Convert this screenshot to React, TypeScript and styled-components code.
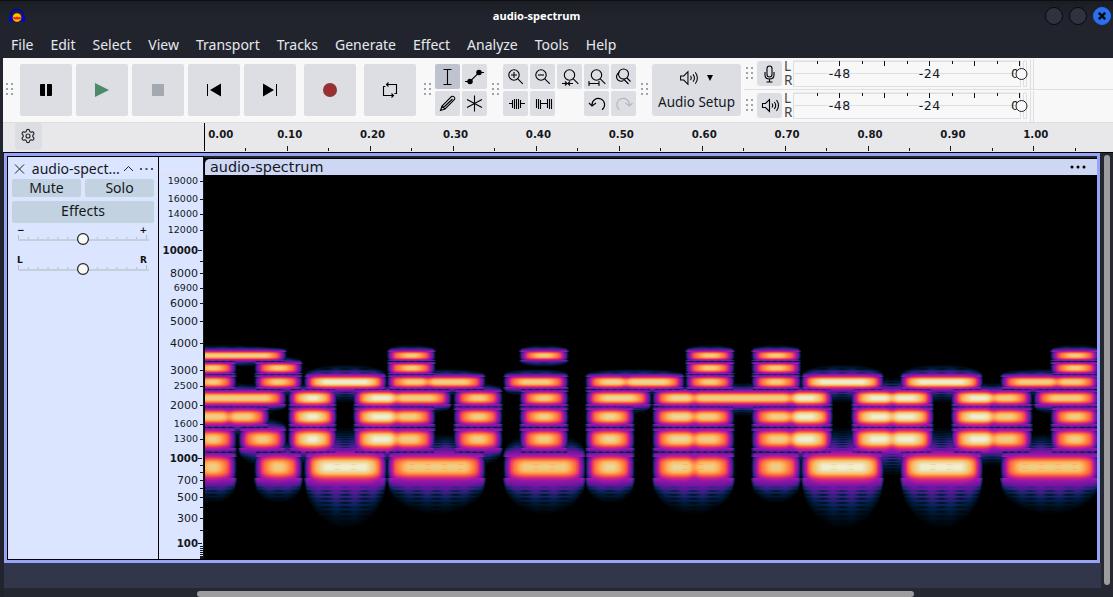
import React, { useLayoutEffect, useRef } from 'react';
import styled, { createGlobalStyle, css } from 'styled-components';
import { Settings } from 'lucide-react';

const Global = createGlobalStyle`
  * { box-sizing: border-box; }
  html, body { margin: 0; overflow: hidden; background: #22242d; }
  button { border: 0; margin: 0; padding: 0; font: inherit; color: inherit; }
  svg, canvas { display: block; }
`;

const Window = styled.div`
  width: 1113px;
  height: 597px;
  display: flex;
  flex-direction: column;
  background: #22242d;
  color: #15171c;
  font-family: 'Noto Sans', sans-serif;
  overflow: hidden;
`;

const TitleBar = styled.header`
  height: 31px;
  flex: none;
  display: grid;
  grid-template-columns: 1fr auto 1fr;
  align-items: center;
  border-top: 1px solid #0e0f13;
  background: linear-gradient(#1b1d24, #22242d 16px);
  color: #fff;
`;
const AppIcon = styled.div`
  padding: 0 0 1px 8px;
`;
const Title = styled.h1`
  margin: 0;
  padding: 0 40px 2px 0;
  font-size: 11.1px;
  font-weight: 700;
  line-height: 27px;
`;
const Controls = styled.div`
  display: flex;
  justify-content: flex-end;
  gap: 6px;
  padding-right: 2px;
`;
const Control = styled.button<{ $close?: boolean }>`
  width: 18px;
  height: 18px;
  border-radius: 50%;
  border: 1px solid ${p => (p.$close ? '#2a70ef' : '#08090c')};
  background: ${p => (p.$close ? '#2a70ef' : '#30333f')};
  display: grid;
  place-items: center;
`;
const MenuBar = styled.nav`
  height: 27px;
  flex: none;
  display: flex;
  gap: 17px;
  padding-left: 11px;
  font-size: 14px;
  line-height: 27px;
  color: #e6e8ee;
`;

const Toolbars = styled.section`
  height: 65px;
  flex: none;
  margin-left: 3px;
  display: flex;
  background: #f8f8f8;
  border-bottom: 1px solid #dcdde0;
`;
const Grip = styled.span<{ $w: number; $top: number; $pad?: number }>`
  width: ${p => p.$w}px;
  height: 13px;
  flex: none;
  margin-top: ${p => p.$top}px;
  padding-left: ${p => p.$pad ?? 3}px;
`;
const Transport = styled.div`
  display: flex;
  padding-top: 6px;
  width: 401px;
`;
const BigButton = styled.button<{ $gap?: number }>`
  width: 52px;
  height: 52px;
  flex: none;
  margin-right: ${p => p.$gap ?? 4}px;
  border-radius: 2px;
  background: #dddee3;
  display: grid;
  place-items: center;
`;
const ToolGrid = styled.div<{ $cols: number }>`
  display: grid;
  grid-template-columns: repeat(${p => p.$cols}, 25px);
  grid-auto-rows: 25px;
  gap: 2px;
  padding-top: 6px;
`;
const Tool = styled.button<{ $on?: boolean; $col?: number }>`
  border-radius: 2px;
  background: ${p => (p.$on ? '#bfc2cf' : '#dddee3')};
  ${p => p.$col && css`grid-column: ${p.$col};`}
`;
const Setup = styled.button`
  width: 89px;
  height: 52px;
  flex: none;
  margin-top: 6px;
  border-radius: 3px;
  background: #dddee3;
  font-size: 13.5px;
  display: flex;
  flex-direction: column;
  align-items: center;
  white-space: nowrap;
  line-height: 22px;
`;
const SetupIcons = styled.span`
  display: flex;
  align-items: center;
  gap: 6px;
  height: 27px;
  padding-right: 3px;
`;
const Meters = styled.div`
  flex: 1;
  min-width: 0;
  padding-left: 3px;
`;
const MeterRow = styled.div`
  height: 32px;
  display: flex;
  padding-top: 3px;
  border-bottom: 1px solid #dedfe3;
  &:last-child { border-bottom: 0; }
`;
const MeterButton = styled.button`
  width: 25px;
  height: 25px;
  flex: none;
  border-radius: 3px;
  background: #dddee3;
`;
const Channels = styled.span`
  width: 11px;
  flex: none;
  padding-left: 2px;
  font-size: 13.5px;
  line-height: 13.5px;
  margin-top: -1px;
  color: #444;
`;
const Scale = styled.svg`
  flex: none;
  overflow: visible;
`;

const RulerBar = styled.div`
  height: 30px;
  flex: none;
  margin-left: 3px;
  display: flex;
  background: #e8e8ea;
  border-bottom: 1px solid #000;
`;
const RulerHead = styled.div`
  width: 201px;
  padding: 0 12px;
`;
const Gear = styled.button`
  width: 27px;
  height: 27px;
  border-radius: 4px;
  background: #dddee3;
  display: grid;
  place-items: center;
  padding: 0 1px 1px 0;
`;

const Workspace = styled.main`
  flex: 1;
  min-height: 0;
  display: flex;
  background: #22242d;
`;
const TrackColumn = styled.div`
  width: 1101px;
  padding-left: 4px;
  display: flex;
  flex-direction: column;
`;
const Track = styled.div`
  width: 1096px;
  height: 410px;
  display: flex;
  border: 3px solid #97a3f7;
  background: #dbe5ff;
`;
const Panel = styled.aside`
  width: 152px;
  border: 1px solid #000;
  padding: 3px 4px 0;
`;
const PanelHead = styled.div`
  height: 19px;
  display: flex;
  align-items: center;
  padding: 0 0 2px 2px;
  font-size: 14px;
`;
const TrackName = styled.span`
  width: 97px;
  padding-left: 7px;
  white-space: nowrap;
`;
const PanelRow = styled.div`
  display: flex;
  gap: 4px;
  margin-bottom: 4px;
`;
const PanelButton = styled.button<{ $h: number }>`
  flex: 1;
  height: ${p => p.$h}px;
  border-radius: 2px;
  background: #c3d2e1;
  font-size: 14px;
  line-height: ${p => (p.$h > 20 ? 20 : 18)}px;
  padding-bottom: ${p => (p.$h > 20 ? 2 : 0)}px;
`;
const Sliders = styled.div`
  margin-top: -3px;
`;
const VRuler = styled.div`
  width: 45px;
  border-top: 1px solid #000;
  border-bottom: 1px solid #000;
`;
const Clip = styled.section`
  width: 893px;
  background: #000;
  border-top: 2px solid #22242d;
`;
const ClipHead = styled.div`
  height: 17px;
  margin-left: 1px;
  width: 892px;
  padding: 0 11px 0 5px;
  display: flex;
  justify-content: space-between;
  align-items: center;
  border-top: 1px solid #000;
  border-radius: 5px 0 0 0;
  background: #cdd6f2;
  font-family: 'DejaVu Sans', sans-serif;
  font-size: 14.4px;
  line-height: 15px;
`;
const Canvas = styled.canvas`
  margin-left: 1px;
`;
const Below = styled.div`
  height: 25px;
  background: #32364a;
`;
const HScroll = styled.div`
  flex: 1;
  padding: 3px 0 0 193px;
  background: #262831;
`;
const HThumb = styled.div`
  width: 717px;
  height: 6px;
  border-radius: 3px;
  background: #9d9d9f;
`;
const VScroll = styled.div`
  flex: 1;
  padding: 2px 0 0 3px;
  background: #262831;
`;
const VThumb = styled.div`
  width: 6px;
  height: 430px;
  border-radius: 3px;
  background: #9d9d9f;
`;

/* ---------- spectrogram ---------- */
const ROWS: number[][][] = [
  [[140, 285], [389, 434], [521, 567], [687, 733], [753, 799], [1052, 1098]],
  [[190, 235], [256, 301], [389, 434], [687, 733], [753, 799], [1052, 1098]],
  [[190, 235], [256, 301], [306, 385], [389, 484, 428], [505, 567], [587, 683, 626], [687, 733], [753, 799], [803, 882], [902, 981], [1002, 1098, 1057]],
  [[140, 285], [290, 335], [355, 450, 396], [455, 501], [521, 567], [587, 650], [654, 831, 694, 791], [853, 932, 892], [953, 1031, 993], [1035, 1098]],
  [[180, 268, 229], [290, 335], [355, 434, 396], [455, 501], [521, 567], [587, 633], [654, 733, 694], [753, 831, 791], [853, 932, 892], [953, 1031, 993], [1052, 1098]],
  [[190, 235], [240, 285], [290, 335], [355, 434, 396], [455, 501], [521, 567], [587, 633], [654, 733, 694], [753, 831, 791], [853, 932, 892], [953, 1031, 993], [1052, 1098]],
  [[190, 235], [256, 301], [306, 385], [389, 484], [505, 584], [587, 633], [654, 733, 694], [753, 799], [803, 882], [902, 981], [1002, 1098]],
];
const STOPS: number[][] = [
  [0, 0, 0, 0], [0.1, 0, 14, 28], [0.2, 0, 32, 72], [0.3, 50, 32, 122], [0.4, 102, 22, 160],
  [0.52, 158, 22, 166], [0.62, 208, 36, 126], [0.72, 246, 82, 76], [0.8, 255, 134, 62],
  [0.87, 252, 184, 98], [0.92, 238, 208, 138], [1, 240, 243, 220],
];
const lerpTable = (t: number[][], v: number, k: number) => {
  if (v <= t[0][0]) return t[0][k];
  for (let i = 1; i < t.length; i++) {
    if (v <= t[i][0]) {
      const u = (v - t[i - 1][0]) / (t[i][0] - t[i - 1][0]);
      return t[i - 1][k] + u * (t[i][k] - t[i - 1][k]);
    }
  }
  return t[t.length - 1][k];
};
const FREQ_LOSS = [[0, 0], [40, 0.02], [80, 0.08], [110, 0.17], [140, 0.28], [170, 0.38], [210, 0.47], [240, 0.56]];
const EDGE_LOSS = [[-3, 1], [-1, 0.78], [0, 0.64], [1, 0.54], [3, 0.42], [6, 0.24], [9, 0.15], [14, 0.07], [20, 0]];
const smooth = (x: number, at: number) => 1 / (1 + Math.exp(-(x - at) / 2));
const peakAt = (x: number) =>
  0.92 +
  0.075 * (smooth(x, 288) * (1 - smooth(x, 396))) +
  0.02 * (smooth(x, 585) * (1 - smooth(x, 694))) +
  0.075 * (smooth(x, 794) * (1 - smooth(x, 993)));

function levelAt(x: number, y: number) {
  const f = 700 * (Math.pow(10, ((558.5 - y) * 10) / 2595) - 1);
  let first = 0;
  let second = 0;
  for (let r = 0; r < 7; r++) {
    const df = Math.abs(f - (876 + (6 - r) * 444));
    if (df > 760) continue;
    let best = 0;
    for (const [a, b, ...dips] of ROWS[r]) {
      const d = Math.min(x - a, b - x);
      if (d < -2) continue;
      const hot = (a >= 290 && b <= 386) || (a > 800 && b < 985);
      const peak = hot ? 0.995 : b < 302 ? 0.92 : peakAt(x);
      const e = lerpTable(EDGE_LOSS, d, 1);
      const g = lerpTable(FREQ_LOSS, df, 1);
      let v = df > 240 ? 0 : peak - Math.pow(Math.pow(e, 1.5) + Math.pow(g, 1.5), 1 / 1.5);
      for (const p of dips) v -= 0.09 * Math.exp(-((x - p) ** 2) / 20);
      const wide = b - a > 60;
      const half = wide ? (b - a) / 2 : 23;
      const far = r === 6 ? (wide ? (hot ? 660 : 540) : 430) : wide && hot ? 560 : 420;
      const u = Math.min(1, Math.max(0, (d + 1) / half));
      const reach = 230 + (far - 230) * Math.sqrt(1 - (1 - u) ** 2);
      if (df > 150) {
        const t = Math.max(0, 1 - (df - 150) / (reach - 150));
        const c = (x - (a + b) / 2) * 0.33;
        const amount = Math.min(0.26, Math.max(0, df - 225) / 400);
        const ripple = 1 - amount * (1 + Math.cos((df / 43) * 6.283)) * (0.65 + 0.45 * Math.cos(c));
        v = Math.max(v, 0.54 * Math.pow(t, 0.85) * ripple * Math.min(1, (d + 4) / 5));
      }
      if (r === 6 && wide && b - a < 100 && df < 45 && d > 18) {
        v -= 0.045 * Math.max(0, Math.cos((y - 467) * 2.6)) * Math.max(0, Math.cos((x - (a + b) / 2 - 8) * 0.38));
      }
      if (v > best) best = v;
    }
    if (best > first) { second = first; first = best; } else if (best > second) second = best;
  }
  const lower = (f - 876) / 444;
  const mid = Math.abs(lower - Math.floor(lower) - 0.5) * 444;
  if (second > 0.2 && lower > 0 && lower < 6) {
    first -= (0.2 + 0.07 * Math.cos(x * 0.9)) * Math.exp(-(mid * mid) / 170);
  }
  return first;
}

function Spectrogram() {
  const ref = useRef<HTMLCanvasElement>(null);
  useLayoutEffect(() => {
    const ctx = ref.current!.getContext('2d')!;
    const img = ctx.createImageData(892, 384);
    for (let j = 0; j < 384; j++) {
      for (let i = 0; i < 892; i++) {
        const v = j < 155 ? 0 : levelAt(205.5 + i, 175.5 + j);
        const o = (j * 892 + i) * 4;
        for (let k = 0; k < 3; k++) img.data[o + k] = lerpTable(STOPS, v, k + 1);
        img.data[o + 3] = 255;
      }
    }
    ctx.putImageData(img, 0, 0);
  }, []);
  return <Canvas ref={ref} width={892} height={384} />;
}

/* ---------- rulers ---------- */
const FREQS: [string, number, number][] = [
  ['19000', 181, 0], ['16000', 199, 0], ['14000', 214, 0], ['12000', 230, 0], ['10000', 250, 2], ['8000', 273, 1],
  ['6900', 287.5, 0], ['6000', 303, 1], ['5000', 321, 1], ['4000', 343, 1], ['3000', 370, 1], ['2500', 386, 0],
  ['2000', 405, 1], ['1600', 424, 0], ['1300', 439, 0], ['1000', 458, 2], ['700', 480, 1], ['500', 497, 1],
  ['300', 518, 1], ['100', 543, 2],
];
const MINOR = [261, 465, 472, 488, 507, 530, 546, 548, 550, 552, 554, 556, 557, 558];

const FreqRuler = () => (
  <svg width="45" height="402" viewBox="159 157 45 402" fontFamily="DejaVu Sans, sans-serif" fill="#15171c" textAnchor="end">
    <rect x="159" y="174" width="42" height="1" fill="#e4e0ea" />
    {FREQS.map(([t, y, k]) => (
      <g key={t}>
        <text x="198" y={y + (k ? 4 : 3)} fontSize={k === 2 ? 10.2 : k ? 11 : 9.5} fontWeight={k === 2 ? 700 : 400}>{t}</text>
        <rect x={k === 2 ? 198 : 200} y={Math.round(y)} width="4" height="1" />
      </g>
    ))}
    {MINOR.map(y => <rect key={y} x="200" y={y} width="4" height="1" />)}
    <rect x="203" y="157" width="1" height="402" />
  </svg>
);

const TimeRuler = () => (
  <svg width="909" height="29" viewBox="204 123 909 29" fontFamily="DejaVu Sans, sans-serif" fontSize="10.200" fontWeight="700" fill="#15171c" textAnchor="middle">
    <rect x="204" y="123" width="1" height="28" fill="#000" />
    {Array.from({ length: 11 }, (_, i) => (
      <text key={i} x={i ? 206.8 + i * 82.9 : 220.8} y="138">{(i / 10).toFixed(2)}</text>
    ))}
    {Array.from({ length: 21 }, (_, i) => i + 1).map(i => (
      <rect key={i} x={Math.round(204 + i * 41.47)} y={i % 2 ? 148 : 146} width="1" height={i % 2 ? 3 : 5} />
    ))}
  </svg>
);

/* ---------- icons ---------- */
const Dots = () => (
  <svg width="8" height="13" fill="#a0a2ae">
    {[0, 5, 10].map(y => [0, 5].map(x => <rect key={`${x}${y}`} x={x} y={y} width="2" height="2" />))}
  </svg>
);
const Line = ({ children, w = 25, h = 25 }: { children: React.ReactNode; w?: number; h?: number }) => (
  <svg width={w} height={h} viewBox={`0 0 ${w} ${h}`} fill="none" stroke="#000" strokeWidth="1.1">{children}</svg>
);
const Lens = ({ x = 0 }: { x?: number }) => (
  <><circle cx={11 + x} cy="11" r="5.200" /><path d={`M${14.8 + x} 14.800l5 5`} /></>
);
const Speaker = () => (
  <path d="M5.500 10.500h3l4-4v12l-4-4h-3zM15 10.500q1.500 2 0 4M17.300 9q2.800 3.500 0 7M19.500 7q4 5.500 0 11" />
);

const MeterScale = () => (
  <Scale width="320" height="27" viewBox="793 61 320 27" fill="none">
    <path d="M793.500 61v25.500h227V61zM793.500 61.500h227M1023.500 61v25.500h3V61z M793 73.500h227" stroke="#dedfe3" />
    <path d={[817, 839, 862, 884, 907, 929, 952, 974, 997, 1019].map((x, i) => `M${x + 0.5} 61v${i % 2 ? 5 : 3}`).join('')} stroke="#111" />
    <g fontFamily="DejaVu Sans, sans-serif" fontSize="12.500" fill="#15171c" textAnchor="middle">
      <text x="839.500" y="77.500" textLength="21.500">-48</text>
      <text x="929.500" y="77.500" textLength="21.500">-24</text>
      <text x="1015" y="77.500">0</text>
    </g>
    <circle cx="1021.500" cy="74" r="5.500" fill="#f8f8f8" stroke="#222" />
    <path d="M1030.500 59v31M1033.500 59v31" stroke="#dedfe3" />
  </Scale>
);

const Slider = ({ left, right }: { left: string; right: string }) => (
  <svg width="142" height="30" viewBox="12 224 142 30" fontFamily="DejaVu Sans, sans-serif" fontSize="9" fontWeight="700" fill="#111">
    <text x="17" y="232.500">{left}</text>
    <text x="147" y="232.500" textAnchor="end">{right}</text>
    <rect x="18" y="239" width="131" height="2" fill="#c3d0dc" />
    {Array.from({ length: 14 }, (_, i) => (
      <rect key={i} x={18 + i * 9.85} y={i % 13 ? 237 : 235} width="1" height={i % 13 ? 2 : 4} fill="#b9bcc4" />
    ))}
    <circle cx="83" cy="239" r="5.400" fill="#fafafa" stroke="#222" strokeWidth="1.200" />
  </svg>
);

const MENU = ['File', 'Edit', 'Select', 'View', 'Transport', 'Tracks', 'Generate', 'Effect', 'Analyze', 'Tools', 'Help'];

export default function App() {
  return (
    <Window>
      <Global />
      <TitleBar>
        <AppIcon>
          <svg width="18" height="16" viewBox="0 0 18 16">
            <path d="M2.500 10V8a6.500 6.500 0 0 1 13 0v2" fill="none" stroke="#0000c8" strokeWidth="1.500" />
            <rect x="1" y="8" width="3.500" height="6" rx="1.500" fill="#0000e0" />
            <rect x="13.500" y="8" width="3.500" height="6" rx="1.500" fill="#0000e0" />
            <circle cx="9" cy="9.500" r="4.300" fill="#ffc400" />
            <path d="M5 10l1-1.500 1.500 1 1.500-1 1.500 1 1.500-1 1 1.500-1.500 1.500h-5z" fill="#f02010" />
          </svg>
        </AppIcon>
        <Title>audio-spectrum</Title>
        <Controls>
          <Control /><Control />
          <Control $close>
            <svg width="8" height="8"><path d="M.8 .8l6.400 6.400M7.200 .8L.8 7.200" stroke="#0a0c14" strokeWidth="2.500" /></svg>
          </Control>
        </Controls>
      </TitleBar>
      <MenuBar>{MENU.map(m => <span key={m}>{m}</span>)}</MenuBar>

      <Toolbars>
        <Grip $w={17} $top={25}><Dots /></Grip>
        <Transport>
          <BigButton><svg width="12" height="12"><path d="M0 1q0-1 1-1h4v12H1q-1 0-1-1zM7 0h4q1 0 1 1v10q0 1-1 1H7z" /></svg></BigButton>
          <BigButton><svg width="14" height="14"><path d="M0 0l14 7-14 7z" fill="#4c8b6a" /></svg></BigButton>
          <BigButton><svg width="12" height="12"><rect width="12" height="12" fill="#a3a8b1" /></svg></BigButton>
          <BigButton><svg width="14" height="14"><path d="M0 1h1v12H0zM14 .5v13L3 7z" /></svg></BigButton>
          <BigButton $gap={8}><svg width="14" height="14"><path d="M13 1h1v12h-1zM0 .5v13L11 7z" /></svg></BigButton>
          <BigButton $gap={8}><svg width="14" height="14"><circle cx="7" cy="7" r="7" fill="#973032" /></svg></BigButton>
          <BigButton>
            <svg width="16" height="18" fill="none" stroke="#000" strokeWidth="1.100">
              <path d="M1.500 5v9.500h10M9.500 12.500l2 2-2 2M14.500 13V3.500h-10M6.500 1.500l-2 2 2 2M1.500 5.500h2M14.500 12.500h-2" />
            </svg>
          </BigButton>
        </Transport>
        <Grip $w={14} $top={25}><Dots /></Grip>
        <ToolGrid $cols={2}>
          <Tool $on><Line><path d="M8.500 5.500h8M8.500 20.500h8M12.500 5.500v15" /></Line></Tool>
          <Tool><Line><path d="M3 17.500h5L17 8.500h5" /><circle cx="8" cy="17.500" r="2.200" fill="#000" /><circle cx="17" cy="8.500" r="2.200" fill="#000" /></Line></Tool>
          <Tool><Line><path d="M5.500 19.500l1.500-4.500L16.500 5.500q1.500-.8 2.700.5t.3 2.500L10 18zM7 15l3 3M8.500 16.500l9-8.500" /></Line></Tool>
          <Tool><Line><path d="M12.500 4.500v16M5 8.500l15 8M20 8.500l-15 8" /></Line></Tool>
        </ToolGrid>
        <Grip $w={16} $top={25} $pad={5}><Dots /></Grip>
        <ToolGrid $cols={5}>
          <Tool><Line><Lens /><path d="M8 11h6M11 8v6" /></Line></Tool>
          <Tool><Line><Lens /><path d="M8 11h6" /></Line></Tool>
          <Tool><Line><Lens x={1.5} /><path d="M5 19.500h4.500M11 19.500h5M8 17.500l2 2-2 2M13 17.500l-2 2 2 2" /></Line></Tool>
          <Tool><Line><Lens x={1.5} /><path d="M5 19.500h10M5 17v5M15 17v5" /></Line></Tool>
          <Tool><Line><circle cx="12.500" cy="10" r="5" /><path d="M16 14l3.500 3.500M8.500 8.500a4.500 4.500 0 1 0 4 8M12.500 15l5 5" /></Line></Tool>
          <Tool><Line><path d="M6 12.500h3M18 12.500h4M9.500 9v8M11.500 8v10M13.500 8v10M15.500 8v10M17.500 9v8" /></Line></Tool>
          <Tool><Line><path d="M6.500 8v9M8.500 8v10M10.500 9v9M11 12.500h6M17.500 8v9M19.500 8v10M21.500 8v10" /></Line></Tool>
          <Tool $col={4}><Line><path d="M8 14a6.300 6.300 0 1 1 10 4.800M5 12l3 3 4-3" /></Line></Tool>
          <Tool><svg width="25" height="25" fill="none" stroke="#b5b7bd" strokeWidth="1.100"><path d="M18.500 14a6.300 6.300 0 1 0-10 4.800M21.500 12l-3 3-4-3" /></svg></Tool>
        </ToolGrid>
        <Grip $w={16} $top={25} $pad={5}><Dots /></Grip>
        <Setup>
          <SetupIcons>
            <svg width="24" height="22" viewBox="3 2 21 21" fill="none" stroke="#000" strokeWidth="1"><Speaker /></svg>
            <svg width="6" height="6"><path d="M0 0h6L3 6z" /></svg>
          </SetupIcons>
          Audio Setup
        </Setup>
        <Meters>
          <MeterRow>
            <Grip $w={13} $top={6} $pad={2}><Dots /></Grip>
            <MeterButton><Line><rect x="10" y="5" width="5" height="11" rx="2.500" /><path d="M8 11v3q0 4 4.500 4t4.500-4v-3M12.500 18v3M9.500 21h6" /></Line></MeterButton>
            <Channels>L<br />R</Channels><MeterScale />
          </MeterRow>
          <MeterRow>
            <Grip $w={13} $top={6} $pad={2}><Dots /></Grip>
            <MeterButton><Line><Speaker /></Line></MeterButton>
            <Channels>L<br />R</Channels><MeterScale />
          </MeterRow>
        </Meters>
      </Toolbars>

      <RulerBar>
        <RulerHead>
          <Gear><Settings size={16} strokeWidth={1.7} color="#222" /></Gear>
        </RulerHead>
        <TimeRuler />
      </RulerBar>

      <Workspace>
        <TrackColumn>
          <Track>
            <Panel>
              <PanelHead>
                <svg width="11" height="10"><path d="M1 .5l9 9M10 .5l-9 9" stroke="#222" /></svg>
                <TrackName>audio-spect...</TrackName>
                <svg width="34" height="8" fill="none" stroke="#222"><path d="M3 6l4.500-4.500L12 6" /><path d="M19 4h2M24.500 4h2M30 4h2" strokeWidth="1.500" /></svg>
              </PanelHead>
              <PanelRow><PanelButton $h={18}>Mute</PanelButton><PanelButton $h={18}>Solo</PanelButton></PanelRow>
              <PanelRow><PanelButton $h={22}>Effects</PanelButton></PanelRow>
              <Sliders>
                <Slider left="−" right="+" />
                <Slider left="L" right="R" />
              </Sliders>
            </Panel>
            <VRuler><FreqRuler /></VRuler>
            <Clip>
              <ClipHead>
                audio-spectrum
                <svg width="16" height="4"><circle cx="2" cy="2" r="1.500" /><circle cx="8" cy="2" r="1.500" /><circle cx="14" cy="2" r="1.500" /></svg>
              </ClipHead>
              <Spectrogram />
            </Clip>
          </Track>
          <Below />
          <HScroll><HThumb /></HScroll>
        </TrackColumn>
        <VScroll><VThumb /></VScroll>
      </Workspace>
    </Window>
  );
}
